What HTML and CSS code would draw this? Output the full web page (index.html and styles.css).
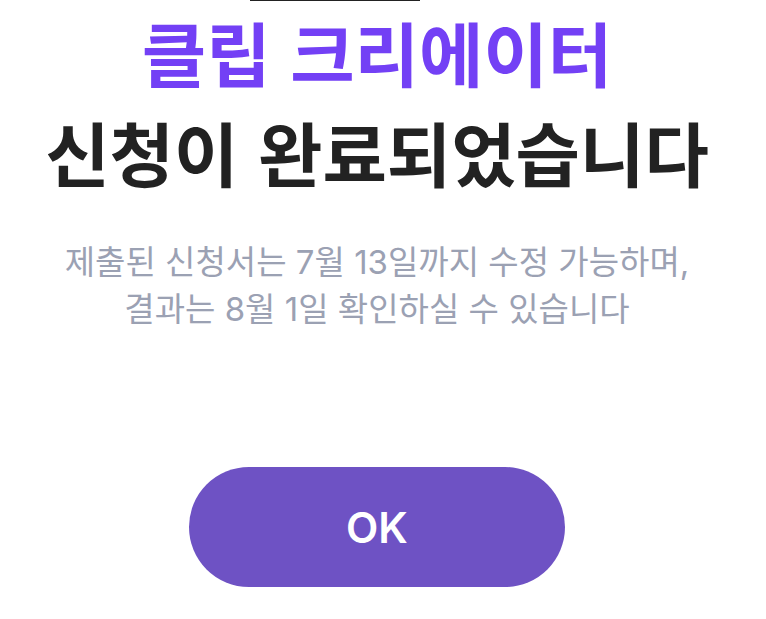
FILE: index.html
```html
<!DOCTYPE html>
<html lang="ko">
<head>
<meta charset="utf-8">
<link rel="stylesheet" href="styles.css">
</head>
<body>
<main class="page">
  <div class="topbar"></div>
  <h1 class="title"><span class="accent">클립 크리에이터</span><br>신청이 완료되었습니다</h1>
  <p class="desc">제출된 신청서는 7월 13일까지 수정 가능하며,<br>결과는 8월 1일 확인하실 수 있습니다</p>
  <button class="ok">OK</button>
</main>
</body>
</html>
```
FILE: styles.css
```css
html, body {
  margin: 0;
  padding: 0;
  background: #ffffff;
}
body {
  font-family: "Noto Sans CJK KR", "Noto Sans", sans-serif;
}
.page {
  width: 754px;
  display: flex;
  flex-direction: column;
  align-items: center;
}
.topbar {
  width: 170px;
  height: 1px;
  margin-right: 84px;
  background: #222222;
}
.title {
  margin: 1px 0 0;
  font-size: 70px;
  font-weight: 700;
  line-height: 100px;
  color: #222222;
  text-align: center;
  white-space: nowrap;
}
.accent {
  color: #7340f5;
}
.desc {
  margin: 37px 0 0;
  font-family: "Inter", "Noto Sans CJK KR", sans-serif;
  font-size: 33px;
  font-weight: 400;
  line-height: 47px;
  color: #9ba1b3;
  text-align: center;
  white-space: nowrap;
}
.ok {
  margin-top: 134px;
  width: 376px;
  height: 120px;
  border: none;
  border-radius: 60px;
  background: #6e52c4;
  color: #ffffff;
  font-family: "Inter", "Noto Sans", sans-serif;
  font-size: 42px;
  font-weight: 600;
  padding: 0;
}
```
